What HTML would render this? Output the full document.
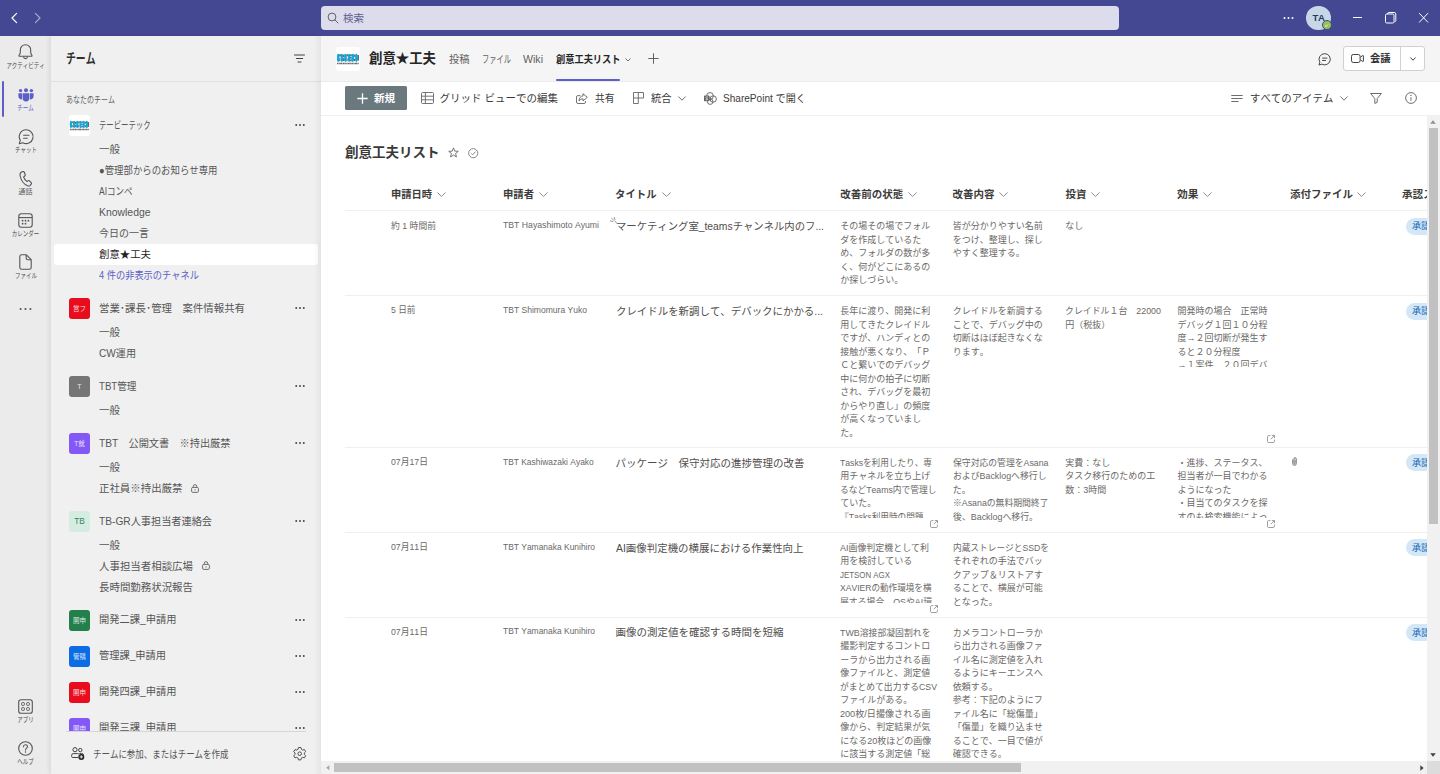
<!DOCTYPE html>
<html lang="ja"><head>
<meta charset="utf-8">
<title>Microsoft Teams</title>
<style>
*{box-sizing:border-box;margin:0;padding:0}
html,body{width:1440px;height:774px;overflow:hidden;background:#fff}
body{text-spacing-trim:space-all;font-kerning:none;font-family:"Liberation Sans","Noto Sans CJK JP",sans-serif;color:#242424;position:relative;font-size:12px}
.abs{position:absolute}
.t{position:absolute;white-space:nowrap;line-height:1;transform-origin:0 50%}
svg{position:absolute;overflow:visible}
/* title bar */
#titlebar{position:absolute;left:0;top:0;width:1440px;height:36px;background:#444791}
#search{position:absolute;left:321px;top:6px;width:798px;height:24px;background:#dcdcec;border-radius:4px}
/* rail */
#rail{position:absolute;left:0;top:36px;width:51px;height:738px;background:#ebebeb}
.rl{position:absolute;width:51px;left:0;text-align:center;font-size:7px;color:#4a4a4a;line-height:1;white-space:nowrap}
/* panel */
#panel{position:absolute;left:51px;top:36px;width:270px;height:738px;background:#f0f0f0;box-shadow:-2px 0 4px rgba(0,0,0,.07)}
.av{position:absolute;left:18px;width:21px;height:21px;border-radius:3px;color:#fff;font-size:6px;line-height:21px;text-align:center;white-space:nowrap;overflow:hidden}
/* main */
#mhead{position:absolute;left:321px;top:36px;width:1119px;height:46px;background:#f5f5f5;border-bottom:1.5px solid #ebebeb}
#cmd{position:absolute;left:321px;top:82px;width:1119px;height:33.5px;background:#fff;border-bottom:1px solid #f1f0ef}
#list{position:absolute;left:321px;top:116px;width:1106px;height:646px;background:#fff;overflow:hidden}
.c{position:absolute;font-size:9px;line-height:13.5px;color:#6b6967;width:110px}
.ln{display:block;width:max-content;white-space:nowrap;transform-origin:0 50%;height:13.5px}
.pill{position:absolute;left:1084.5px;width:60px;height:17px;border-radius:8.5px;background:#d4e7f6}
#vscroll{position:absolute;left:1427px;top:116px;width:13px;height:645px;background:#f1f1f1}
#hscroll{position:absolute;left:321px;top:761px;width:1106px;height:13px;background:#f1f1f1}
.av svg{position:absolute}
</style>
</head>
<body>
<div id="titlebar">
  <svg style="left:9px;top:12px" width="12" height="12" viewBox="0 0 12 12"><path d="M7.6 1.4 L3 6 L7.6 10.6" fill="none" stroke="#fff" stroke-width="1.2" stroke-linecap="round" stroke-linejoin="round"></path></svg>
  <svg style="left:31px;top:12px" width="12" height="12" viewBox="0 0 12 12"><path d="M4.4 1.4 L9 6 L4.4 10.6" fill="none" stroke="#a9aac6" stroke-width="1.2" stroke-linecap="round" stroke-linejoin="round"></path></svg>
  <div id="search">
    <svg style="left:6px;top:6px" width="12" height="12" viewBox="0 0 12 12"><circle cx="5" cy="5" r="3.9" fill="none" stroke="#616161" stroke-width="1"></circle><path d="M7.8 7.8 L11 11" stroke="#616161" stroke-width="1" stroke-linecap="round"></path></svg>
    <span class="t" style="left:22px;top:7.3px;font-size:10.5px;color:#5d5e90">検索</span>
  </div>
  <svg style="left:1283px;top:16px" width="12" height="4" viewBox="0 0 12 4"><circle cx="1.5" cy="2" r="1" fill="#fff"></circle><circle cx="5.5" cy="2" r="1" fill="#fff"></circle><circle cx="9.5" cy="2" r="1" fill="#fff"></circle></svg>
  <div class="abs" style="left:1306.4px;top:5.8px;width:24.2px;height:24.2px;border-radius:50%;background:#c8d7e8;color:#1f3d5c;font-size:9.5px;font-weight:bold;line-height:24px;text-align:center;letter-spacing:-.4px">TA</div>
  <div class="abs" style="left:1321.8px;top:20.4px;width:10px;height:10px;border-radius:50%;background:#92c353;border:1.5px solid #444791"></div>
  <svg style="left:1324.3px;top:22.9px" width="5" height="5" viewBox="0 0 5 5"><path d="M1 2.6 L2.1 3.6 L4 1.5" fill="none" stroke="#fff" stroke-width=".8"></path></svg>
  <svg style="left:1353px;top:17px" width="10" height="2" viewBox="0 0 10 2"><path d="M0 .5 H9" stroke="#fff" stroke-width="1"></path></svg>
  <svg style="left:1385px;top:12px" width="12" height="12" viewBox="0 0 12 12"><rect x=".5" y="2" width="8.5" height="9" rx="1.3" fill="none" stroke="#fff" stroke-width="1"></rect><path d="M2.5 2 V1.8 Q2.5 .5 3.8 .5 H9.2 Q10.8 .5 10.8 2 V8.5 Q10.8 9.6 9.5 9.8" fill="none" stroke="#fff" stroke-width="1"></path></svg>
  <svg style="left:1419px;top:13.3px" width="10" height="10" viewBox="0 0 10 10"><path d="M.4 .4 L8.8 9.2 M8.8 .4 L.4 9.2" stroke="#fff" stroke-width="1" stroke-linecap="round"></path></svg>
</div>
<div id="rail">
  <!-- activity -->
  <svg style="left:18px;top:8px" width="15" height="16" viewBox="0 0 15 16"><path d="M7.5 .8 C4.3 .8 2.3 3.2 2.3 6 V9 L1 11.6 Q.8 12.3 1.6 12.3 H13.4 Q14.2 12.3 14 11.6 L12.7 9 V6 C12.7 3.2 10.7 .8 7.5 .8 Z" fill="none" stroke="#555555" stroke-width="1.1" stroke-linejoin="round"></path><path d="M5.5 12.5 Q5.7 14.6 7.5 14.6 Q9.3 14.6 9.5 12.5" fill="none" stroke="#555555" stroke-width="1.1"></path></svg>
  <div class="rl" style="top:26px"><span class="sx" style="display:inline-block;transform:scaleX(.78)">アクティビティ</span></div>
  <!-- active bar -->
  <div class="abs" style="left:1.5px;top:45px;width:2px;height:36px;border-radius:1px;background:#5b5fc7"></div>
  <!-- teams -->
  <svg style="left:17.5px;top:52px" width="16" height="14" viewBox="0 0 16 14"><g fill="#5b5fc7"><circle cx="2.6" cy="2.6" r="1.7"></circle><circle cx="8" cy="2.2" r="2"></circle><circle cx="13.4" cy="2.6" r="1.7"></circle><path d="M.4 5.3 H4 V11.6 Q.4 11.2 .4 8 Z"></path><path d="M12 5.3 H15.6 V8 Q15.6 11.2 12 11.6 Z"></path><path d="M4.6 5.3 H11.4 V10 Q11.4 13.4 8 13.4 Q4.6 13.4 4.6 10 Z"></path></g></svg>
  <div class="rl" style="top:68px;color:#5b5fc7"><span style="display:inline-block;transform:scaleX(.78)">チーム</span></div>
  <!-- chat -->
  <svg style="left:17.5px;top:93px" width="16" height="16" viewBox="0 0 16 16"><path d="M8.3 .8 A6.9 6.9 0 1 1 4.8 13.7 L1.2 14.8 L2.3 11.3 A6.9 6.9 0 0 1 8.3 .8 Z" fill="none" stroke="#555555" stroke-width="1.1" stroke-linejoin="round"></path><path d="M5.6 6.3 H11 M5.6 9.2 H9.3" stroke="#555555" stroke-width="1.1" stroke-linecap="round"></path></svg>
  <div class="rl" style="top:110px"><span style="display:inline-block;transform:scaleX(.78)">チャット</span></div>
  <!-- calls -->
  <svg style="left:18px;top:135px" width="15" height="16" viewBox="0 0 15 16"><path d="M3.4 1 L5 .6 Q5.9 .4 6.3 1.3 L7.2 3.7 Q7.5 4.5 6.8 5 L5.6 5.9 Q6.4 8.6 8.8 10.4 L10.2 9.7 Q10.9 9.3 11.5 9.9 L13.2 11.7 Q13.8 12.4 13.2 13.1 L12.2 14.3 Q11.2 15.4 9.6 14.8 Q3.6 12.3 2 4.5 Q1.7 2 3.4 1 Z" fill="none" stroke="#555555" stroke-width="1.1" stroke-linejoin="round"></path></svg>
  <div class="rl" style="top:152px;color:#616161"><span style="display:inline-block;transform:scaleX(1)">通話</span></div>
  <!-- calendar -->
  <svg style="left:18px;top:177px" width="15" height="15" viewBox="0 0 15 15"><rect x=".8" y=".8" width="13.4" height="13.4" rx="2.5" fill="none" stroke="#555555" stroke-width="1.1"></rect><path d="M.8 4.6 H14.2" stroke="#555555" stroke-width="1.1"></path><g fill="#555555"><circle cx="4.6" cy="7.7" r=".9"></circle><circle cx="7.5" cy="7.7" r=".9"></circle><circle cx="10.4" cy="7.7" r=".9"></circle><circle cx="4.6" cy="10.7" r=".9"></circle><circle cx="7.5" cy="10.7" r=".9"></circle></g></svg>
  <div class="rl" style="top:194px"><span style="display:inline-block;transform:scaleX(.78)">カレンダー</span></div>
  <!-- files -->
  <svg style="left:19px;top:218px" width="13" height="16" viewBox="0 0 13 16"><path d="M2.5 .8 H7.4 L12.2 5.6 V13.4 Q12.2 15.2 10.5 15.2 H2.5 Q.8 15.2 .8 13.4 V2.6 Q.8 .8 2.5 .8 Z" fill="none" stroke="#555555" stroke-width="1.1" stroke-linejoin="round"></path><path d="M7.2 1 V4.2 Q7.2 5.8 8.8 5.8 H12" fill="none" stroke="#555555" stroke-width="1.1"></path></svg>
  <div class="rl" style="top:236px"><span style="display:inline-block;transform:scaleX(.78)">ファイル</span></div>
  <!-- more -->
  <svg style="left:19px;top:271px" width="13" height="4" viewBox="0 0 13 4"><g fill="#555555"><circle cx="1.6" cy="2" r="1.05"></circle><circle cx="6.5" cy="2" r="1.05"></circle><circle cx="11.4" cy="2" r="1.05"></circle></g></svg>
  <!-- apps -->
  <svg style="left:18px;top:663px" width="15" height="15" viewBox="0 0 15 15"><rect x=".7" y=".7" width="13.6" height="13.6" rx="2.3" fill="none" stroke="#555555" stroke-width="1.1"></rect><g fill="none" stroke="#555555" stroke-width="1"><rect x="3.6" y="3.6" width="2.8" height="2.8" rx=".8"></rect><rect x="8.6" y="3.6" width="2.8" height="2.8" rx=".8"></rect><rect x="3.6" y="8.6" width="2.8" height="2.8" rx=".8"></rect><rect x="8.6" y="8.6" width="2.8" height="2.8" rx=".8"></rect></g></svg>
  <div class="rl" style="top:680px"><span style="display:inline-block;transform:scaleX(.78)">アプリ</span></div>
  <!-- help -->
  <svg style="left:18px;top:705px" width="15" height="15" viewBox="0 0 15 15"><circle cx="7.5" cy="7.5" r="6.8" fill="none" stroke="#555555" stroke-width="1.1"></circle><path d="M5.4 5.8 Q5.5 3.8 7.5 3.8 Q9.5 3.8 9.5 5.6 Q9.5 6.7 8.4 7.4 Q7.5 8 7.5 9.1" fill="none" stroke="#555555" stroke-width="1.1" stroke-linecap="round"></path><circle cx="7.5" cy="11" r=".75" fill="#555555"></circle></svg>
  <div class="rl" style="top:722px"><span style="display:inline-block;transform:scaleX(.78)">ヘルプ</span></div>
</div>
<div id="panel">
<div class="abs" style="left:0;top:45px;width:270px;height:1px;background:#e0e0e0"></div>
<span class="t" style="left: 15px; top: 13px; font-size: 13.5px; line-height: 20.2px; color: rgb(48, 48, 48); font-weight: bold; transform: scaleX(0.7284);">チーム</span>
<svg style="left:243px;top:18px" width="11" height="9" viewBox="0 0 11 9"><path d="M.5 1 H10.5 M2.3 4.5 H8.7 M4 8 H7" stroke="#424242" stroke-width="1" stroke-linecap="round"></path></svg>
<span class="t" style="left: 15px; top: 58.3px; font-size: 9px; line-height: 13.5px; color: rgb(97, 97, 97); font-weight: normal; transform: scaleX(0.7776);">あなたのチーム</span>
<div class="av" style="top:78.8px;background:#fff;height:21px"><svg style="left:0;top:0" width="21" height="21" viewBox="0 0 24 24"><g fill="#2f4a5a" opacity=".8"><rect x="3.1" y="7.3" width="1.9" height="2"></rect><rect x="3.1" y="11.5" width="1.2" height="2.6"></rect><rect x="6.8" y="7.6" width="1.9" height="2.6"></rect><rect x="6.8" y="11.2" width="1.9" height="2.8"></rect><rect x="10.4" y="7.3" width="1.9" height="2"></rect><rect x="10.4" y="11.5" width="1.2" height="2.6"></rect><rect x="14" y="7.4" width="1.9" height="1.7"></rect><rect x="14" y="10" width="1.7" height="1.6"></rect><rect x="14" y="12.5" width="1.9" height="1.7"></rect><rect x="17.7" y="7.6" width="1.8" height="2.2"></rect><rect x="17.7" y="11.8" width="1.8" height="2.2"></rect><rect x="21.3" y="8" width="1.7" height="5.6"></rect></g><g fill="#1aa7d6"><rect x="0.90" y="6.7" width="2.6" height="8.3" rx="1.3" ry="2.4"></rect><rect x="4.55" y="6.7" width="2.6" height="8.3" rx="1.3" ry="2.4"></rect><rect x="8.20" y="6.7" width="2.6" height="8.3" rx="1.3" ry="2.4"></rect><rect x="11.85" y="6.7" width="2.6" height="8.3" rx="1.3" ry="2.4"></rect><rect x="15.50" y="6.7" width="2.6" height="8.3" rx="1.3" ry="2.4"></rect><rect x="19.10" y="6.7" width="2.6" height="8.3" rx="1.3" ry="2.4"></rect></g><path d="M1 16.6 H23" stroke="#6a6a6a" stroke-width="1.5" stroke-dasharray="1.6 .4 .9 .3 2.2 .4 1.2 .3"></path></svg></div>
<span class="t" style="left: 48px; top: 81.5px; font-size: 10.5px; line-height: 15.8px; color: rgb(86, 86, 86); font-weight: normal; transform: scaleX(0.7007);">テービーテック</span>
<svg style="left:244px;top:87px" width="10" height="4" viewBox="0 0 10 4"><g fill="#424242"><circle cx="1.2" cy="2" r=".95"></circle><circle cx="5" cy="2" r=".95"></circle><circle cx="8.8" cy="2" r=".95"></circle></g></svg>
<span class="t" style="left:48px;top:105.7px;font-size:10.5px;line-height:15.8px;color:#565656;font-weight:normal;">一般</span>
<span class="t" style="left: 48px; top: 126.8px; font-size: 10.5px; line-height: 15.8px; color: rgb(86, 86, 86); font-weight: normal; transform: scaleX(0.8954);">●管理部からのお知らせ専用</span>
<span class="t" style="left: 48px; top: 148px; font-size: 10.5px; line-height: 15.8px; color: rgb(86, 86, 86); font-weight: normal; transform: scaleX(0.8088);">AIコンペ</span>
<span class="t" style="left: 48px; top: 169.3px; font-size: 10.5px; line-height: 15.8px; color: rgb(86, 86, 86); font-weight: normal; transform: scaleX(0.991);">Knowledge</span>
<span class="t" style="left: 48px; top: 190px; font-size: 10.5px; line-height: 15.8px; color: rgb(86, 86, 86); font-weight: normal; transform: scaleX(0.9524);">今日の一言</span>
<div class="abs" style="left:3px;top:208px;width:264px;height:20.5px;background:#fff;border-radius:3px"></div>
<span class="t" style="left: 48px; top: 211.2px; font-size: 10.5px; line-height: 15.8px; color: rgb(36, 36, 36); font-weight: normal; transform: scaleX(0.9905);">創意★工夫</span>
<span class="t" style="left: 48px; top: 232.3px; font-size: 10.5px; line-height: 15.8px; color: rgb(91, 95, 199); font-weight: normal; transform: scaleX(0.879);">4 件の非表示のチャネル</span>
<div class="av" style="top:261.8px;background:#e80c1c;color:rgba(255,255,255,.85);font-size:6.5px;height:21px;">営フ</div>
<span class="t" style="left: 48px; top: 264.5px; font-size: 10.5px; line-height: 15.8px; color: rgb(86, 86, 86); font-weight: normal; transform: scaleX(0.9932);">営業･課長･管理　案件情報共有</span>
<svg style="left:244px;top:270px" width="10" height="4" viewBox="0 0 10 4"><g fill="#424242"><circle cx="1.2" cy="2" r=".95"></circle><circle cx="5" cy="2" r=".95"></circle><circle cx="8.8" cy="2" r=".95"></circle></g></svg>
<span class="t" style="left:48px;top:289.0px;font-size:10.5px;line-height:15.8px;color:#565656;font-weight:normal;">一般</span>
<span class="t" style="left: 48px; top: 310.2px; font-size: 10.5px; line-height: 15.8px; color: rgb(86, 86, 86); font-weight: normal; transform: scaleX(0.961);">CW運用</span>
<div class="av" style="top:339.5px;background:#757575;color:rgba(255,255,255,.85);font-size:7px;height:21px;">T</div>
<span class="t" style="left: 48px; top: 342.6px; font-size: 10.5px; line-height: 15.8px; color: rgb(86, 86, 86); font-weight: normal; transform: scaleX(0.9181);">TBT管理</span>
<svg style="left:244px;top:348px" width="10" height="4" viewBox="0 0 10 4"><g fill="#424242"><circle cx="1.2" cy="2" r=".95"></circle><circle cx="5" cy="2" r=".95"></circle><circle cx="8.8" cy="2" r=".95"></circle></g></svg>
<span class="t" style="left:48px;top:367.0px;font-size:10.5px;line-height:15.8px;color:#565656;font-weight:normal;">一般</span>
<div class="av" style="top:396.7px;background:#8358f6;color:rgba(255,255,255,.85);font-size:6.5px;height:21px;">T就</div>
<span class="t" style="left: 48px; top: 399.6px; font-size: 10.5px; line-height: 15.8px; color: rgb(86, 86, 86); font-weight: normal; transform: scaleX(0.9716);">TBT　公開文書　※持出厳禁</span>
<svg style="left:244px;top:405px" width="10" height="4" viewBox="0 0 10 4"><g fill="#424242"><circle cx="1.2" cy="2" r=".95"></circle><circle cx="5" cy="2" r=".95"></circle><circle cx="8.8" cy="2" r=".95"></circle></g></svg>
<span class="t" style="left:48px;top:424.0px;font-size:10.5px;line-height:15.8px;color:#565656;font-weight:normal;">一般</span>
<span class="t" style="left: 48px; top: 445.2px; font-size: 10.5px; line-height: 15.8px; color: rgb(86, 86, 86); font-weight: normal; transform: scaleX(0.994);">正社員※持出厳禁</span>
<svg style="left:140px;top:447.7px" width="8" height="9" viewBox="0 0 8 9"><rect x=".6" y="3.4" width="6.8" height="5" rx="1.2" fill="none" stroke="#616161" stroke-width=".9"></rect><path d="M2.3 3.4 V2.4 Q2.3 .6 4 .6 Q5.7 .6 5.7 2.4 V3.4" fill="none" stroke="#616161" stroke-width=".9"></path><circle cx="4" cy="5.9" r=".6" fill="#616161"></circle></svg>
<div class="av" style="top:474.70000000000005px;background:#d5ede1;color:#3a8463;font-size:8.3px;height:21px;">TB</div>
<span class="t" style="left: 48px; top: 477.8px; font-size: 10.5px; line-height: 15.8px; color: rgb(86, 86, 86); font-weight: normal; transform: scaleX(0.9685);">TB-GR人事担当者連絡会</span>
<svg style="left:244px;top:483px" width="10" height="4" viewBox="0 0 10 4"><g fill="#424242"><circle cx="1.2" cy="2" r=".95"></circle><circle cx="5" cy="2" r=".95"></circle><circle cx="8.8" cy="2" r=".95"></circle></g></svg>
<span class="t" style="left:48px;top:501.8px;font-size:10.5px;line-height:15.8px;color:#565656;font-weight:normal;">一般</span>
<span class="t" style="left: 48px; top: 522.8px; font-size: 10.5px; line-height: 15.8px; color: rgb(86, 86, 86); font-weight: normal; transform: scaleX(0.9947);">人事担当者相談広場</span>
<svg style="left:150.5px;top:525.3px" width="8" height="9" viewBox="0 0 8 9"><rect x=".6" y="3.4" width="6.8" height="5" rx="1.2" fill="none" stroke="#616161" stroke-width=".9"></rect><path d="M2.3 3.4 V2.4 Q2.3 .6 4 .6 Q5.7 .6 5.7 2.4 V3.4" fill="none" stroke="#616161" stroke-width=".9"></path><circle cx="4" cy="5.9" r=".6" fill="#616161"></circle></svg>
<span class="t" style="left: 48px; top: 543.8px; font-size: 10.5px; line-height: 15.8px; color: rgb(86, 86, 86); font-weight: normal; transform: scaleX(0.9947);">長時間勤務状況報告</span>
<div class="av" style="top:573.7px;background:#23804c;color:rgba(255,255,255,.85);font-size:6.5px;height:21px;">開申</div>
<span class="t" style="left: 48px; top: 576.2px; font-size: 10.5px; line-height: 15.8px; color: rgb(86, 86, 86); font-weight: normal; transform: scaleX(0.9768);">開発二課_申請用</span>
<svg style="left:244px;top:582px" width="10" height="4" viewBox="0 0 10 4"><g fill="#424242"><circle cx="1.2" cy="2" r=".95"></circle><circle cx="5" cy="2" r=".95"></circle><circle cx="8.8" cy="2" r=".95"></circle></g></svg>
<div class="av" style="top:609.7px;background:#0b6ce4;color:rgba(255,255,255,.85);font-size:6.5px;height:21px;">管購</div>
<span class="t" style="left: 48px; top: 612.3px; font-size: 10.5px; line-height: 15.8px; color: rgb(86, 86, 86); font-weight: normal; transform: scaleX(0.9732);">管理課_申請用</span>
<svg style="left:244px;top:618px" width="10" height="4" viewBox="0 0 10 4"><g fill="#424242"><circle cx="1.2" cy="2" r=".95"></circle><circle cx="5" cy="2" r=".95"></circle><circle cx="8.8" cy="2" r=".95"></circle></g></svg>
<div class="av" style="top:646.0px;background:#e80c1c;color:rgba(255,255,255,.85);font-size:6.5px;height:21px;">開申</div>
<span class="t" style="left: 48px; top: 648.3px; font-size: 10.5px; line-height: 15.8px; color: rgb(86, 86, 86); font-weight: normal; transform: scaleX(0.9768);">開発四課_申請用</span>
<svg style="left:244px;top:654px" width="10" height="4" viewBox="0 0 10 4"><g fill="#424242"><circle cx="1.2" cy="2" r=".95"></circle><circle cx="5" cy="2" r=".95"></circle><circle cx="8.8" cy="2" r=".95"></circle></g></svg>
<div class="av" style="top:682.0px;background:#8358f6;color:rgba(255,255,255,.85);font-size:6.5px;height:21px;">開申</div>
<span class="t" style="left: 48px; top: 684.3px; font-size: 10.5px; line-height: 15.8px; color: rgb(86, 86, 86); font-weight: normal; transform: scaleX(0.9768);">開発三課_申請用</span>
<svg style="left:244px;top:690px" width="10" height="4" viewBox="0 0 10 4"><g fill="#424242"><circle cx="1.2" cy="2" r=".95"></circle><circle cx="5" cy="2" r=".95"></circle><circle cx="8.8" cy="2" r=".95"></circle></g></svg>
<div class="abs" style="left:0;top:695px;width:270px;height:43px;background:#f0f0f0"></div>
<div class="abs" style="left:15px;top:695px;width:240px;height:1px;background:#d6d6d6"></div>
<svg style="left:20px;top:711px" width="14" height="13" viewBox="0 0 14 13"><g fill="none" stroke="#424242" stroke-width="1"><circle cx="4" cy="2.7" r="2.1"></circle><circle cx="9.3" cy="3.1" r="1.7"></circle><path d="M7 10.5 H1.8 Q.6 10.5 .6 9.3 V8.4 Q.6 6.6 2.4 6.6 H6.4 Q7.6 6.6 8 7.2"></path><path d="M8.3 6.6 H10.8 Q12.4 6.6 12.6 7.8"></path></g><circle cx="10.3" cy="9.9" r="3" fill="#242424"></circle><path d="M10.3 8.3 V11.5 M8.7 9.9 H11.9" stroke="#fff" stroke-width=".9"></path></svg>
<span class="t" style="left: 42px; top: 710.8px; font-size: 10.5px; line-height: 15.8px; color: rgb(86, 86, 86); font-weight: normal; transform: scaleX(0.8065);">チームに参加、またはチームを作成</span>
<svg style="left:242px;top:710.8px" width="13.4" height="13.4" viewBox="0 0 13.4 13.4"><path d="M5.04 2.30 L5.45 0.53 L7.95 0.53 L8.36 2.30 L9.68 3.07 L11.42 2.53 L12.67 4.70 L11.34 5.93 L11.34 7.47 L12.67 8.70 L11.42 10.87 L9.68 10.33 L8.36 11.10 L7.95 12.87 L5.45 12.87 L5.04 11.10 L3.72 10.33 L1.98 10.87 L0.73 8.70 L2.06 7.47 L2.06 5.93 L0.73 4.70 L1.98 2.53 L3.72 3.07 Z" fill="none" stroke="#4f4f4f" stroke-width="1" stroke-linejoin="round"></path><circle cx="6.7" cy="6.7" r="1.8" fill="none" stroke="#4f4f4f" stroke-width="1"></circle></svg>
<div class="abs" style="left:263px;top:0;width:7px;height:738px;background:linear-gradient(90deg,rgba(0,0,0,0),rgba(0,0,0,.05))"></div>
</div>
<div id="mhead">
<div class="abs" style="left:15px;top:10.600000000000001px;width:24px;height:24px;border-radius:3px;background:#fff"><svg style="left:0;top:0" width="24" height="24" viewBox="0 0 24 24"><g fill="#2f4a5a" opacity=".8"><rect x="3.1" y="7.3" width="1.9" height="2"></rect><rect x="3.1" y="11.5" width="1.2" height="2.6"></rect><rect x="6.8" y="7.6" width="1.9" height="2.6"></rect><rect x="6.8" y="11.2" width="1.9" height="2.8"></rect><rect x="10.4" y="7.3" width="1.9" height="2"></rect><rect x="10.4" y="11.5" width="1.2" height="2.6"></rect><rect x="14" y="7.4" width="1.9" height="1.7"></rect><rect x="14" y="10" width="1.7" height="1.6"></rect><rect x="14" y="12.5" width="1.9" height="1.7"></rect><rect x="17.7" y="7.6" width="1.8" height="2.2"></rect><rect x="17.7" y="11.8" width="1.8" height="2.2"></rect><rect x="21.3" y="8" width="1.7" height="5.6"></rect></g><g fill="#1aa7d6"><rect x="0.90" y="6.7" width="2.6" height="8.3" rx="1.3" ry="2.4"></rect><rect x="4.55" y="6.7" width="2.6" height="8.3" rx="1.3" ry="2.4"></rect><rect x="8.20" y="6.7" width="2.6" height="8.3" rx="1.3" ry="2.4"></rect><rect x="11.85" y="6.7" width="2.6" height="8.3" rx="1.3" ry="2.4"></rect><rect x="15.50" y="6.7" width="2.6" height="8.3" rx="1.3" ry="2.4"></rect><rect x="19.10" y="6.7" width="2.6" height="8.3" rx="1.3" ry="2.4"></rect></g><path d="M1 16.6 H23" stroke="#6a6a6a" stroke-width="1.5" stroke-dasharray="1.6 .4 .9 .3 2.2 .4 1.2 .3"></path></svg></div>
<span class="t" style="left: 48px; top: 13px; font-size: 13.5px; line-height: 20.2px; color: rgb(36, 36, 36); font-weight: bold; transform: scaleX(0.9926);">創意★工夫</span>
<span class="t" style="left: 127.8px; top: 16.1px; font-size: 10.5px; line-height: 15.8px; color: rgb(97, 97, 97); font-weight: normal; transform: scaleX(0.9762);">投稿</span>
<span class="t" style="left: 160.5px; top: 16.1px; font-size: 10.5px; line-height: 15.8px; color: rgb(97, 97, 97); font-weight: normal; transform: scaleX(0.6905);">ファイル</span>
<span class="t" style="left: 202px; top: 16.1px; font-size: 10.5px; line-height: 15.8px; color: rgb(97, 97, 97); font-weight: normal; transform: scaleX(1.0087);">Wiki</span>
<span class="t" style="left: 234.8px; top: 16.1px; font-size: 10.5px; line-height: 15.8px; color: rgb(36, 36, 36); font-weight: bold; transform: scaleX(0.8776);">創意工夫リスト</span>
<svg style="left:304px;top:21.5px" width="6" height="4" viewBox="0 0 6 4"><path d="M.5 .5 L3 3 L5.5 .5" fill="none" stroke="#616161" stroke-width=".9"></path></svg>
<svg style="left:326.5px;top:17px" width="11" height="11" viewBox="0 0 11 11"><path d="M5.5 .3 V10.7 M.3 5.5 H10.7" stroke="#616161" stroke-width="1"></path></svg>
<div class="abs" style="left:234.79999999999995px;top:42.5px;width:64.5px;height:2.5px;background:#5b5fc7;border-radius:1px"></div>
<svg style="left:997px;top:16.5px" width="13" height="13" viewBox="0 0 16 16"><path d="M8.3 .8 A6.9 6.9 0 1 1 4.8 13.7 L1.2 14.8 L2.3 11.3 A6.9 6.9 0 0 1 8.3 .8 Z" fill="none" stroke="#424242" stroke-width="1.2" stroke-linejoin="round"></path><path d="M5.6 6.3 H11 M5.6 9.2 H9.3" stroke="#424242" stroke-width="1.2" stroke-linecap="round"></path></svg>
<div class="abs" style="left:1021.5px;top:10.299999999999997px;width:82px;height:24.3px;border:1px solid #d1d1d1;border-radius:3px;background:#fff"></div>
<div class="abs" style="left:1079px;top:10.799999999999997px;width:1px;height:23.3px;background:#d1d1d1"></div>
<svg style="left:1030px;top:18.299999999999997px" width="13" height="9" viewBox="0 0 13 9"><rect x=".5" y=".5" width="8.6" height="8" rx="1.8" fill="none" stroke="#424242" stroke-width="1"></rect><path d="M9.4 3.2 L11.6 1.6 Q12.4 1.2 12.4 2 V7 Q12.4 7.8 11.6 7.4 L9.4 5.8" fill="none" stroke="#424242" stroke-width="1"></path></svg>
<span class="t" style="left: 1049px; top: 15.3px; font-size: 10.5px; line-height: 15.8px; color: rgb(51, 51, 51); font-weight: bold; transform: scaleX(0.9762);">会議</span>
<svg style="left:1089px;top:21px" width="6" height="4" viewBox="0 0 6 4"><path d="M.4 .5 L3 3.2 L5.6 .5" fill="none" stroke="#424242" stroke-width="1"></path></svg>
</div>
<div id="cmd">
<div class="abs" style="left:24px;top:4.200000000000003px;width:61.5px;height:24px;background:#69797e;border-radius:1.5px"></div>
<svg style="left:36px;top:10.5px" width="11" height="11" viewBox="0 0 11 11"><path d="M5.5 .3 V10.7 M.3 5.5 H10.7" stroke="#fff" stroke-width="1.3"></path></svg>
<span class="t" style="left: 52.8px; top: 9.2px; font-size: 10.5px; line-height: 15.8px; color: rgb(255, 255, 255); font-weight: bold; transform: scaleX(1.0095);">新規</span>
<svg style="left:99.80000000000001px;top:10px" width="13" height="12" viewBox="0 0 13 12"><rect x=".5" y=".5" width="12" height="11" rx="1" fill="none" stroke="#666462" stroke-width=".9"></rect><path d="M.5 4.2 H12.5 M.5 7.8 H12.5 M4.4 .5 V11.5" stroke="#666462" stroke-width=".9"></path></svg>
<span class="t" style="left:118.5px;top:9.2px;font-size:10.5px;line-height:15.8px;color:#3b3a39;font-weight:normal;">グリッド ビューでの編集</span>
<svg style="left:254.79999999999995px;top:10.5px" width="12" height="11" viewBox="0 0 12 11"><path d="M4.3 2.6 H2 Q.5 2.6 .5 4 V9 Q.5 10.5 2 10.5 H8 Q9.5 10.5 9.5 9 V8" fill="none" stroke="#666462" stroke-width=".9"></path><path d="M7 .7 L11.3 4.3 L7 7.9 V5.8 Q4.2 5.7 3 7.9 Q3.3 3.2 7 2.9 Z" fill="none" stroke="#605e5c" stroke-width=".9" stroke-linejoin="round"></path></svg>
<span class="t" style="left: 274px; top: 9.2px; font-size: 10.5px; line-height: 15.8px; color: rgb(59, 58, 57); font-weight: normal; transform: scaleX(0.9286);">共有</span>
<svg style="left:312px;top:10.299999999999997px" width="11" height="12" viewBox="0 0 11 12"><path d="M.5 .5 H10.5 V6 H.5 Z M5.3 .5 V6 M.5 6 V11.5 H5.3 V6" fill="none" stroke="#666462" stroke-width=".9"></path></svg>
<span class="t" style="left: 329.8px; top: 9.2px; font-size: 10.5px; line-height: 15.8px; color: rgb(59, 58, 57); font-weight: normal; transform: scaleX(0.9762);">統合</span>
<svg style="left:357.29999999999995px;top:14.299999999999997px" width="8" height="5" viewBox="0 0 8 5"><path d="M.4 .5 L4 4.2 L7.6 .5" fill="none" stroke="#605e5c" stroke-width=".9"></path></svg>
<svg style="left:383.20000000000005px;top:10px" width="13" height="13" viewBox="0 0 13 13"><circle cx="6" cy="4" r="3.4" fill="none" stroke="#605e5c" stroke-width=".9"></circle><circle cx="9.2" cy="7" r="3.2" fill="none" stroke="#605e5c" stroke-width=".9"></circle><circle cx="6.2" cy="9.6" r="2.8" fill="none" stroke="#605e5c" stroke-width=".9"></circle><rect x="0" y="3.6" width="5.6" height="5.6" rx=".8" fill="#666462"></rect><path d="M3.9 5 Q2 4.4 1.9 5.6 Q1.9 6.3 2.9 6.5 Q3.9 6.8 3.7 7.5 Q3.3 8.3 1.7 7.7" fill="none" stroke="#fff" stroke-width=".7"></path></svg>
<span class="t" style="left: 402px; top: 9.2px; font-size: 10.5px; line-height: 15.8px; color: rgb(59, 58, 57); font-weight: normal; transform: scaleX(0.9586);">SharePoint で開く</span>
<svg style="left:910.3px;top:12.5px" width="12" height="7" viewBox="0 0 12 7"><path d="M.3 .5 H11.7 M.3 3.5 H11.7 M.3 6.5 H7.6" stroke="#605e5c" stroke-width=".9"></path></svg>
<span class="t" style="left: 929px; top: 9.2px; font-size: 10.5px; line-height: 15.8px; color: rgb(59, 58, 57); font-weight: normal; transform: scaleX(0.9917);">すべてのアイテム</span>
<svg style="left:1019px;top:14.299999999999997px" width="8" height="5" viewBox="0 0 8 5"><path d="M.4 .5 L4 4.2 L7.6 .5" fill="none" stroke="#605e5c" stroke-width=".9"></path></svg>
<svg style="left:1048.7px;top:11px" width="12" height="11" viewBox="0 0 12 11"><path d="M.6 .5 H11.4 L7.2 5.6 V9.4 L4.8 10.4 V5.6 Z" fill="none" stroke="#605e5c" stroke-width=".9" stroke-linejoin="round"></path></svg>
<svg style="left:1084px;top:10px" width="12" height="12" viewBox="0 0 12 12"><circle cx="6" cy="6" r="5.4" fill="none" stroke="#605e5c" stroke-width=".9"></circle><path d="M6 5.2 V8.8" stroke="#666462" stroke-width=".9"></path><circle cx="6" cy="3.4" r=".65" fill="#666462"></circle></svg>
</div>
<div id="list">
<span class="t" style="left: 24px; top: 27.2px; font-size: 13.2px; line-height: 19.8px; color: rgb(58, 57, 56); font-weight: bold; transform: scaleX(1.0237);">創意工夫リスト</span>
<svg style="left:126.5px;top:30.80000000000001px" width="11" height="11" viewBox="0 0 11 11"><path d="M5.50 0.90 L6.79 4.12 L10.26 4.35 L7.59 6.58 L8.44 9.95 L5.50 8.10 L2.56 9.95 L3.41 6.58 L0.74 4.35 L4.21 4.12 Z" fill="none" stroke="#605e5c" stroke-width=".85" stroke-linejoin="round"></path></svg>
<svg style="left:147px;top:32px" width="10.4" height="10.4" viewBox="0 0 10 10"><circle cx="5" cy="5" r="4.4" fill="none" stroke="#7a7876" stroke-width=".85"></circle><path d="M3 5.2 L4.4 6.6 L7.2 3.6" fill="none" stroke="#7a7876" stroke-width=".85"></path></svg>
<span class="t" style="left: 69.5px; top: 70.8px; font-size: 10.5px; line-height: 15.8px; color: rgb(61, 60, 58); font-weight: bold; transform: scaleX(0.9762);">申請日時</span>
<svg style="left:116px;top:76.19999999999999px" width="9" height="5" viewBox="0 0 9 5"><path d="M.4 .5 L4.5 4.4 L8.6 .5" fill="none" stroke="#767472" stroke-width=".8"></path></svg>
<span class="t" style="left: 182px; top: 70.8px; font-size: 10.5px; line-height: 15.8px; color: rgb(61, 60, 58); font-weight: bold; transform: scaleX(0.9841);">申請者</span>
<svg style="left:217.70000000000005px;top:76.19999999999999px" width="9" height="5" viewBox="0 0 9 5"><path d="M.4 .5 L4.5 4.4 L8.6 .5" fill="none" stroke="#767472" stroke-width=".8"></path></svg>
<span class="t" style="left: 294px; top: 70.8px; font-size: 10.5px; line-height: 15.8px; color: rgb(61, 60, 58); font-weight: bold; transform: scaleX(0.9881);">タイトル</span>
<svg style="left:341px;top:76.19999999999999px" width="9" height="5" viewBox="0 0 9 5"><path d="M.4 .5 L4.5 4.4 L8.6 .5" fill="none" stroke="#767472" stroke-width=".8"></path></svg>
<span class="t" style="left:519.2px;top:70.8px;font-size:10.5px;line-height:15.8px;color:#3d3c3a;font-weight:bold;">改善前の状態</span>
<svg style="left:587px;top:76.19999999999999px" width="9" height="5" viewBox="0 0 9 5"><path d="M.4 .5 L4.5 4.4 L8.6 .5" fill="none" stroke="#767472" stroke-width=".8"></path></svg>
<span class="t" style="left:631.6px;top:70.8px;font-size:10.5px;line-height:15.8px;color:#3d3c3a;font-weight:bold;">改善内容</span>
<svg style="left:678px;top:76.19999999999999px" width="9" height="5" viewBox="0 0 9 5"><path d="M.4 .5 L4.5 4.4 L8.6 .5" fill="none" stroke="#767472" stroke-width=".8"></path></svg>
<span class="t" style="left:744.4000000000001px;top:70.8px;font-size:10.5px;line-height:15.8px;color:#3d3c3a;font-weight:bold;">投資</span>
<svg style="left:770px;top:76.19999999999999px" width="9" height="5" viewBox="0 0 9 5"><path d="M.4 .5 L4.5 4.4 L8.6 .5" fill="none" stroke="#767472" stroke-width=".8"></path></svg>
<span class="t" style="left: 856.4px; top: 70.8px; font-size: 10.5px; line-height: 15.8px; color: rgb(61, 60, 58); font-weight: bold; transform: scaleX(1.0238);">効果</span>
<svg style="left:882px;top:76.19999999999999px" width="9" height="5" viewBox="0 0 9 5"><path d="M.4 .5 L4.5 4.4 L8.6 .5" fill="none" stroke="#767472" stroke-width=".8"></path></svg>
<span class="t" style="left:969px;top:70.8px;font-size:10.5px;line-height:15.8px;color:#3d3c3a;font-weight:bold;">添付ファイル</span>
<svg style="left:1036px;top:76.19999999999999px" width="9" height="5" viewBox="0 0 9 5"><path d="M.4 .5 L4.5 4.4 L8.6 .5" fill="none" stroke="#767472" stroke-width=".8"></path></svg>
<span class="t" style="left: 1081px; top: 70.8px; font-size: 10.5px; line-height: 15.8px; color: rgb(61, 60, 58); font-weight: bold; transform: scaleX(1.0068);">承認ステータス</span>
<svg style="left:1159px;top:76.19999999999999px" width="9" height="5" viewBox="0 0 9 5"><path d="M.4 .5 L4.5 4.4 L8.6 .5" fill="none" stroke="#767472" stroke-width=".8"></path></svg>
<div class="abs" style="left:24px;top:94.0px;width:1100px;height:1px;background:#f1f0ef"></div>
<div class="abs" style="left:24px;top:179.0px;width:1100px;height:1px;background:#f1f0ef"></div>
<div class="abs" style="left:24px;top:331.0px;width:1100px;height:1px;background:#f1f0ef"></div>
<div class="abs" style="left:24px;top:415.79999999999995px;width:1100px;height:1px;background:#f1f0ef"></div>
<div class="abs" style="left:24px;top:500.5px;width:1100px;height:1px;background:#f1f0ef"></div>
<span class="t" style="left: 69.5px; top: 103.5px; font-size: 9px; line-height: 13.5px; color: rgb(107, 105, 103); font-weight: normal; transform: scaleX(0.9779);">約 1 時間前</span>
<span class="t" style="left: 182px; top: 103px; font-size: 9px; line-height: 13.5px; color: rgb(107, 105, 103); font-weight: normal; transform: scaleX(0.9645);">TBT Hayashimoto Ayumi</span>
<span class="t" style="left: 294.5px; top: 103px; font-size: 10.5px; line-height: 15.8px; color: rgb(80, 78, 76); font-weight: normal; transform: scaleX(0.9849);">マーケティング室_teamsチャンネル内のフ...</span>
<div class="pill" style="top:101.80000000000001px"></div><span class="t" style="left:1091px;top:104.4px;font-size:9px;line-height:13.5px;color:#1068b8;font-weight:normal;">承認済み</span>
<span class="t" style="left: 69.5px; top: 188.3px; font-size: 9px; line-height: 13.5px; color: rgb(107, 105, 103); font-weight: normal; transform: scaleX(0.9602);">5 日前</span>
<span class="t" style="left: 182px; top: 187.8px; font-size: 9px; line-height: 13.5px; color: rgb(107, 105, 103); font-weight: normal; transform: scaleX(0.9488);">TBT Shimomura Yuko</span>
<span class="t" style="left: 294.5px; top: 187.8px; font-size: 10.5px; line-height: 15.8px; color: rgb(80, 78, 76); font-weight: normal; transform: scaleX(0.9939);">クレイドルを新調して、デバックにかかる...</span>
<div class="pill" style="top:186.60000000000002px"></div><span class="t" style="left:1091px;top:189.2px;font-size:9px;line-height:13.5px;color:#1068b8;font-weight:normal;">承認済み</span>
<span class="t" style="left: 69.5px; top: 340px; font-size: 9px; line-height: 13.5px; color: rgb(107, 105, 103); font-weight: normal; transform: scaleX(0.9729);">07月17日</span>
<span class="t" style="left: 182px; top: 339.5px; font-size: 9px; line-height: 13.5px; color: rgb(107, 105, 103); font-weight: normal; transform: scaleX(0.9346);">TBT Kashiwazaki Ayako</span>
<span class="t" style="left:294.5px;top:339.5px;font-size:10.5px;line-height:15.8px;color:#504e4c;font-weight:normal;">パッケージ　保守対応の進捗管理の改善</span>
<div class="pill" style="top:338.3px"></div><span class="t" style="left:1091px;top:340.9px;font-size:9px;line-height:13.5px;color:#1068b8;font-weight:normal;">承認済み</span>
<span class="t" style="left: 69.5px; top: 425px; font-size: 9px; line-height: 13.5px; color: rgb(107, 105, 103); font-weight: normal; transform: scaleX(0.9729);">07月11日</span>
<span class="t" style="left: 182px; top: 424.5px; font-size: 9px; line-height: 13.5px; color: rgb(107, 105, 103); font-weight: normal; transform: scaleX(0.9383);">TBT Yamanaka Kunihiro</span>
<span class="t" style="left: 294.5px; top: 424.5px; font-size: 10.5px; line-height: 15.8px; color: rgb(80, 78, 76); font-weight: normal; transform: scaleX(0.9951);">AI画像判定機の横展における作業性向上</span>
<div class="pill" style="top:423.29999999999995px"></div><span class="t" style="left:1091px;top:425.9px;font-size:9px;line-height:13.5px;color:#1068b8;font-weight:normal;">承認済み</span>
<span class="t" style="left: 69.5px; top: 509.9px; font-size: 9px; line-height: 13.5px; color: rgb(107, 105, 103); font-weight: normal; transform: scaleX(0.9729);">07月11日</span>
<span class="t" style="left: 182px; top: 509.4px; font-size: 9px; line-height: 13.5px; color: rgb(107, 105, 103); font-weight: normal; transform: scaleX(0.9383);">TBT Yamanaka Kunihiro</span>
<span class="t" style="left:294.5px;top:509.4px;font-size:10.5px;line-height:15.8px;color:#504e4c;font-weight:normal;">画像の測定値を確認する時間を短縮</span>
<div class="pill" style="top:508.20000000000005px"></div><span class="t" style="left:1091px;top:510.8px;font-size:9px;line-height:13.5px;color:#1068b8;font-weight:normal;">承認済み</span>
<svg style="left:289px;top:101px" width="8" height="7" viewBox="0 0 8 7"><path d="M7.3 6.6 L4.6 3.9 M4.3 .4 L4.9 2.6 M.4 3.9 L2.8 4.5 M1.6 1.2 L3.4 2.9" stroke="#62788a" stroke-width=".75" stroke-linecap="round"></path></svg>
<div class="c" style="left:519.2px;top:104.25px;"><span class="ln">その場その場でフォル</span><span class="ln">ダを作成しているた</span><span class="ln">め、フォルダの数が多</span><span class="ln">く、何がどこにあるの</span><span class="ln">か探しづらい。</span></div>
<div class="c" style="left:631.7px;top:104.25px;"><span class="ln">皆が分かりやすい名前</span><span class="ln">をつけ、整理し、探し</span><span class="ln">やすく整理する。</span></div>
<div class="c" style="left:744.3px;top:104.25px;"><span class="ln">なし</span></div>
<div class="c" style="left:519.2px;top:189.05px;"><span class="ln">長年に渡り、開発に利</span><span class="ln">用してきたクレイドル</span><span class="ln">ですが、ハンディとの</span><span class="ln">接触が悪くなり、「Ｐ</span><span class="ln">Ｃと繋いでのデバッグ</span><span class="ln">中に何かの拍子に切断</span><span class="ln">され、デバッグを最初</span><span class="ln">からやり直し」の頻度</span><span class="ln">が高くなっていまし</span><span class="ln">た。</span></div>
<div class="c" style="left:631.7px;top:189.05px;"><span class="ln">クレイドルを新調する</span><span class="ln">ことで、デバッグ中の</span><span class="ln">切断はほぼ起きなくな</span><span class="ln">ります。</span></div>
<div class="c" style="left:744.3px;top:189.05px;"><span class="ln" style="transform: scaleX(0.9894);">クレイドル１台　22000</span><span class="ln">円（税抜）</span></div>
<div class="c" style="left:856.4000000000001px;top:189.05px;height:62.3px;overflow:hidden;"><span class="ln">開発時の場合　正常時</span><span class="ln">デバッグ１回１０分程</span><span class="ln">度→２回切断が発生す</span><span class="ln">ると２０分程度</span><span class="ln">→１案件　２０回デバ</span></div>
<svg style="left:946.3px;top:319.4px" width="8" height="8" viewBox="0 0 8 8"><path d="M3.4 .6 H1.6 Q.5 .6 .5 1.7 V6.4 Q.5 7.5 1.6 7.5 H6.3 Q7.4 7.5 7.4 6.4 V4.6" fill="none" stroke="#8a8886" stroke-width=".8"></path><path d="M4.8 .5 H7.5 V3.2 M7.4 .6 L3.8 4.2" fill="none" stroke="#8a8886" stroke-width=".8"></path></svg>
<div class="c" style="left:519.2px;top:340.75px;height:61.5px;overflow:hidden;"><span class="ln" style="transform: scaleX(0.9582);">Tasksを利用したり、専</span><span class="ln">用チャネルを立ち上げ</span><span class="ln" style="transform: scaleX(0.9697);">るなどTeams内で管理し</span><span class="ln">ていた。</span><span class="ln" style="transform: scaleX(0.9596);">『Tasks利用時の問題</span></div>
<svg style="left:608.7px;top:404px" width="8" height="8" viewBox="0 0 8 8"><path d="M3.4 .6 H1.6 Q.5 .6 .5 1.7 V6.4 Q.5 7.5 1.6 7.5 H6.3 Q7.4 7.5 7.4 6.4 V4.6" fill="none" stroke="#8a8886" stroke-width=".8"></path><path d="M4.8 .5 H7.5 V3.2 M7.4 .6 L3.8 4.2" fill="none" stroke="#8a8886" stroke-width=".8"></path></svg>
<div class="c" style="left:631.7px;top:340.75px;"><span class="ln" style="transform: scaleX(0.9792);">保守対応の管理をAsana</span><span class="ln" style="transform: scaleX(0.9839);">およびBacklogへ移行し</span><span class="ln">た。</span><span class="ln" style="transform: scaleX(0.9792);">※Asanaの無料期間終了</span><span class="ln" style="transform: scaleX(0.988);">後、Backlogへ移行。</span></div>
<div class="c" style="left:744.3px;top:340.75px;"><span class="ln">実費：なし</span><span class="ln">タスク移行のための工</span><span class="ln">数：3時間</span></div>
<div class="c" style="left:856.4000000000001px;top:340.75px;height:61.5px;overflow:hidden;"><span class="ln">・進捗、ステータス、</span><span class="ln">担当者が一目でわかる</span><span class="ln">ようになった</span><span class="ln">・目当てのタスクを探</span><span class="ln">すのも検索機能によっ</span></div>
<svg style="left:946.4000000000001px;top:404px" width="8" height="8" viewBox="0 0 8 8"><path d="M3.4 .6 H1.6 Q.5 .6 .5 1.7 V6.4 Q.5 7.5 1.6 7.5 H6.3 Q7.4 7.5 7.4 6.4 V4.6" fill="none" stroke="#8a8886" stroke-width=".8"></path><path d="M4.8 .5 H7.5 V3.2 M7.4 .6 L3.8 4.2" fill="none" stroke="#8a8886" stroke-width=".8"></path></svg>
<svg style="left:971px;top:340.8px" width="5" height="9" viewBox="0 0 5 9"><path d="M.7 2.4 V6.4 Q.7 8.4 2.5 8.4 Q4.3 8.4 4.3 6.4 V2.2 Q4.3 .6 3 .6 Q1.9 .6 1.9 2.2 V6.2 Q1.9 7 2.5 7 Q3.1 7 3.1 6.2 V2.6" fill="none" stroke="#605e5c" stroke-width=".8"></path></svg>
<div class="c" style="left:519.2px;top:425.75px;height:61.5px;overflow:hidden;"><span class="ln" style="transform: scaleX(0.9942);">AI画像判定機として利</span><span class="ln">用を検討している</span><span class="ln" style="transform: scaleX(0.877);">JETSON AGX</span><span class="ln" style="transform: scaleX(0.953);">XAVIERの動作環境を横</span><span class="ln" style="transform: scaleX(0.9838);">展する場合、OSやAI環</span></div>
<svg style="left:608.7px;top:489px" width="8" height="8" viewBox="0 0 8 8"><path d="M3.4 .6 H1.6 Q.5 .6 .5 1.7 V6.4 Q.5 7.5 1.6 7.5 H6.3 Q7.4 7.5 7.4 6.4 V4.6" fill="none" stroke="#8a8886" stroke-width=".8"></path><path d="M4.8 .5 H7.5 V3.2 M7.4 .6 L3.8 4.2" fill="none" stroke="#8a8886" stroke-width=".8"></path></svg>
<div class="c" style="left:631.7px;top:425.75px;"><span class="ln" style="transform: scaleX(0.9647);">内蔵ストレージとSSDを</span><span class="ln">それぞれの手法でバッ</span><span class="ln">クアップ＆リストアす</span><span class="ln">ることで、横展が可能</span><span class="ln">となった。</span></div>
<div class="c" style="left:519.2px;top:510.65px;"><span class="ln" style="transform: scaleX(0.9837);">TWB溶接部凝固割れを</span><span class="ln">撮影判定するコントロ</span><span class="ln">ーラから出力される画</span><span class="ln">像ファイルと、測定値</span><span class="ln" style="transform: scaleX(0.9747);">がまとめて出力するCSV</span><span class="ln">ファイルがある。</span><span class="ln" style="transform: scaleX(1.0108);">200枚/日撮像される画</span><span class="ln">像から、判定結果が気</span><span class="ln">になる20枚ほどの画像</span><span class="ln">に該当する測定値「総</span></div>
<div class="c" style="left:631.7px;top:510.65px;"><span class="ln">カメラコントローラか</span><span class="ln">ら出力される画像ファ</span><span class="ln">イル名に測定値を入れ</span><span class="ln">るようにキーエンスへ</span><span class="ln">依頼する。</span><span class="ln">参考：下記のようにフ</span><span class="ln">ァイル名に「総傷量」</span><span class="ln">「傷量」を織り込ませ</span><span class="ln">ることで、一目で値が</span><span class="ln">確認できる。</span></div>
</div>
<div id="vscroll">
<svg style="left:3.3px;top:4.2px" width="6" height="4" viewBox="0 0 6 4"><path d="M3 .3 L5.8 3.7 H.2 Z" fill="#8f8f8f"></path></svg>
<div class="abs" style="left:2px;top:12px;width:9.2px;height:396.2px;background:#c1c1c1"></div>
<svg style="left:3.3px;top:636.7px" width="6" height="4" viewBox="0 0 6 4"><path d="M3 3.7 L5.8 .3 H.2 Z" fill="#404040"></path></svg>
</div>
<div id="hscroll">
<svg style="left:4.5px;top:4px" width="3.6" height="5.4" viewBox="0 0 4 6"><path d="M.3 3 L3.7 .2 V5.8 Z" fill="#a3a3a3"></path></svg>
<div class="abs" style="left:13px;top:2.3px;width:686.5px;height:8.8px;background:#c1c1c1"></div>
<svg style="left:1098.5px;top:4px" width="4" height="6" viewBox="0 0 4 6"><path d="M3.7 3 L.3 .2 V5.8 Z" fill="#404040"></path></svg>
</div>
<div class="abs" style="left:1427px;top:761px;width:13px;height:13px;background:#dcdcdc"></div>


</body></html>
